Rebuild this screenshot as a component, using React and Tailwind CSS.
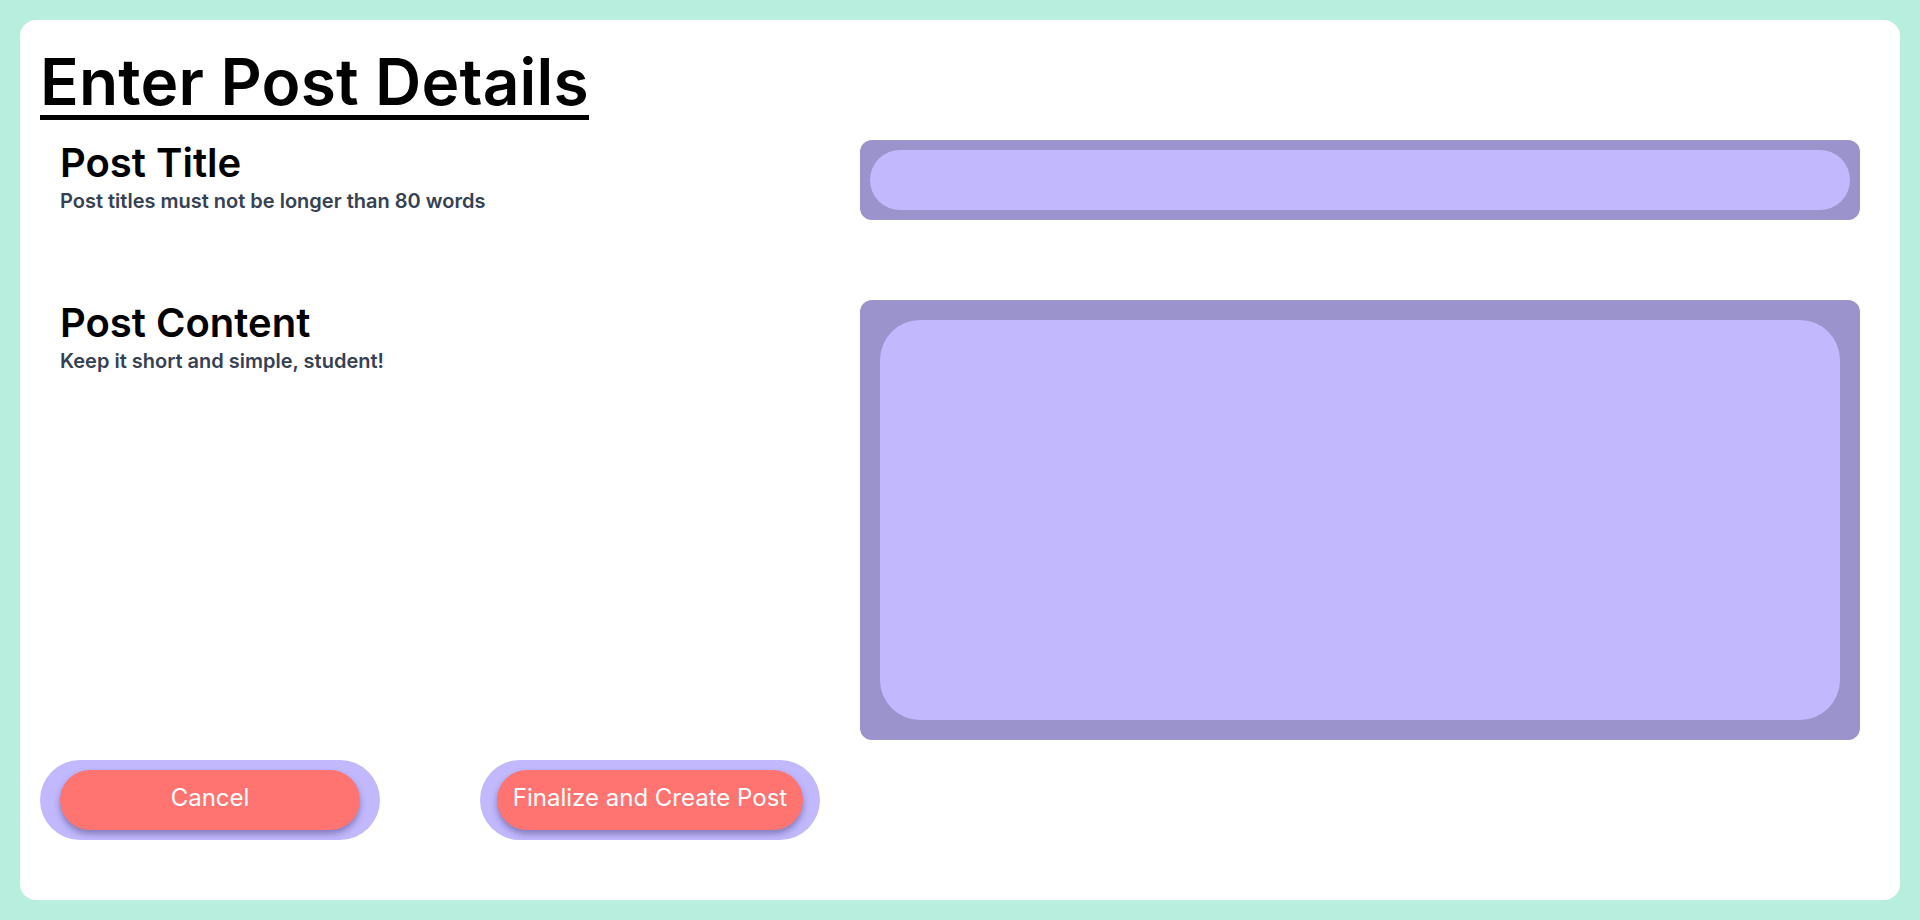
import React from "react";

const FormRow = ({ title, hint, children }) => (
  <div className="flex px-5">
    <div className="flex-1 pt-[3px]">
      <h2 className="text-[40px] leading-10 font-semibold text-black">
        {title}
      </h2>
      <p className="mt-1 text-xl leading-7 font-semibold text-gray-700">
        {hint}
      </p>
    </div>
    {children}
  </div>
);

const PillButton = ({ label }) => (
  <div className="flex h-20 w-[340px] items-center justify-center rounded-full bg-[#c1b8fd]">
    <button className="h-[60px] min-w-[300px] rounded-full bg-[#ff7370] px-4 pb-1 text-2xl text-white shadow-[0_4px_6px_rgba(60,50,110,0.45)]">
      {label}
    </button>
  </div>
);

export default function App() {
  return (
    <div
      className="min-h-screen bg-[#b8eedd] p-5"
      style={{ fontFamily: "Inter, 'Noto Sans', sans-serif" }}
    >
      <div className="flex h-[880px] flex-col rounded-2xl bg-white p-5">
        <div className="mt-2.5">
          <h1 className="inline-block border-b-[5px] border-black pb-px text-[64px] leading-[64px] font-semibold tracking-[0.2px] text-black">
            Enter Post Details
          </h1>
        </div>

        <div className="mt-5">
          <FormRow
            title="Post Title"
            hint="Post titles must not be longer than 80 words"
          >
            <div className="h-20 w-[1000px] rounded-xl bg-[#9b93cb] p-2.5">
              <input
                type="text"
                className="h-full w-full rounded-full bg-[#c1b8fd] px-6 text-xl outline-none"
              />
            </div>
          </FormRow>
        </div>

        <div className="mt-20">
          <FormRow title="Post Content" hint="Keep it short and simple, student!">
            <div className="h-[440px] w-[1000px] rounded-xl bg-[#9b93cb] p-5">
              <textarea className="h-full w-full resize-none rounded-[40px] bg-[#c1b8fd] p-6 text-xl outline-none" />
            </div>
          </FormRow>
        </div>

        <div className="mt-5 flex gap-[100px]">
          <PillButton label="Cancel" />
          <PillButton label="Finalize and Create Post" />
        </div>
      </div>
    </div>
  );
}
